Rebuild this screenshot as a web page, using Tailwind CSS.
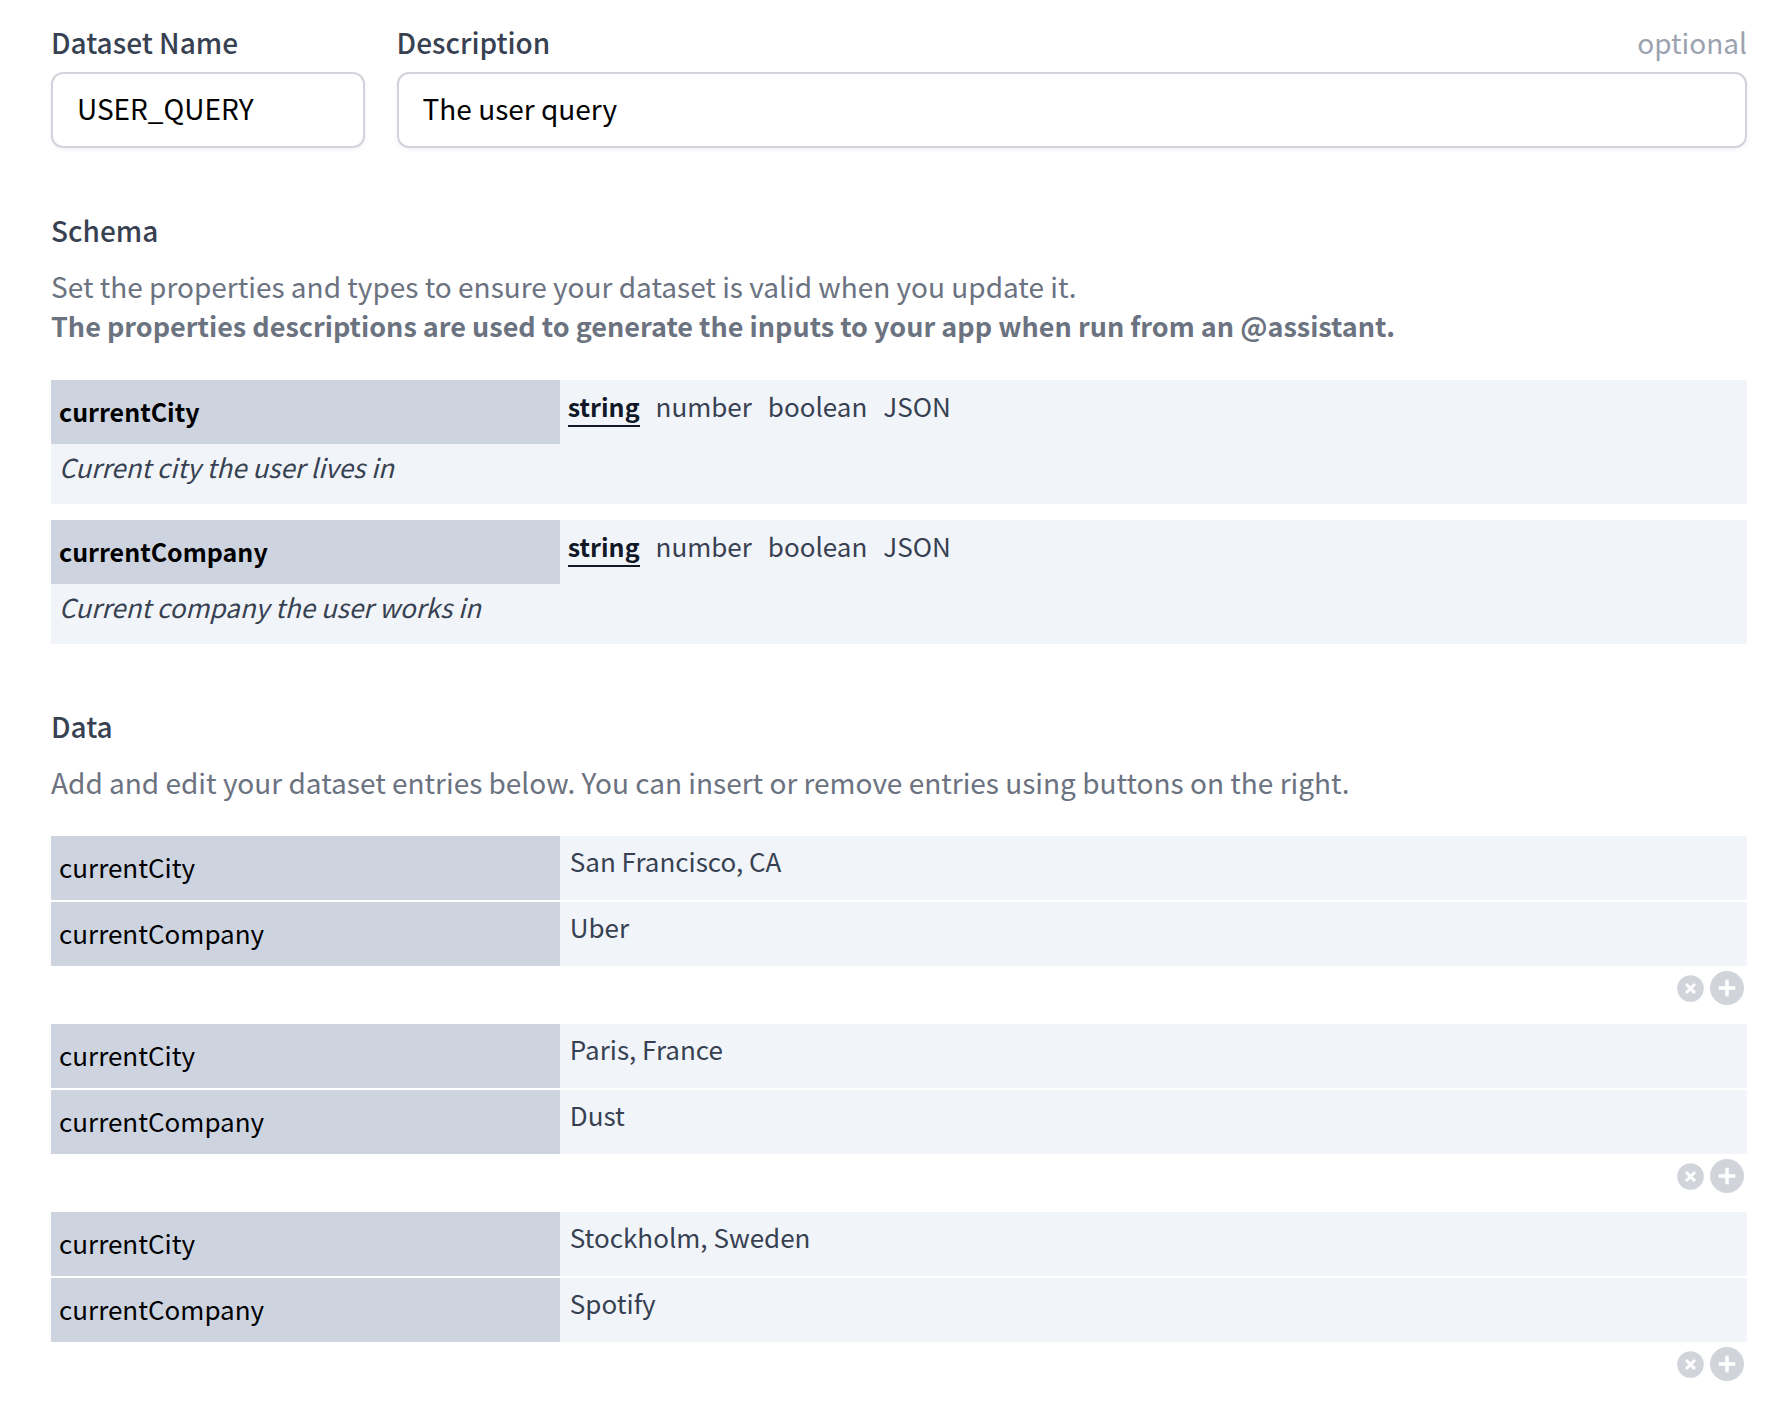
<!DOCTYPE html>
<html lang="en">
<head>
<meta charset="utf-8">
<meta name="viewport" content="width=device-width, initial-scale=1">
<title>Dataset</title>
<script src="https://cdn.jsdelivr.net/npm/@tailwindcss/browser@4"></script>
</head>
<body class="bg-white font-['Noto_Sans_CJK_SC',sans-serif] text-[28px] text-[#374151]">
<main class="pt-6 pr-[41px] pb-3 pl-[51px]">

  <form class="grid grid-cols-5 gap-8">
    <div>
      <label for="name" class="block leading-9 font-medium">Dataset Name</label>
      <input id="name" type="text" value="USER_QUERY" class="mt-3 block h-[76px] w-full rounded-xl border-2 border-[#d1d5db] bg-white px-6 pb-1 text-black shadow-[0_2px_4px_rgba(0,0,0,0.05)]">
    </div>
    <div class="col-span-4">
      <div class="flex justify-between leading-9">
        <label for="description" class="font-medium">Description</label>
        <span class="text-[#9ca3af]">optional</span>
      </div>
      <input id="description" type="text" value="The user query" class="mt-3 block h-[76px] w-full rounded-xl border-2 border-[#d1d5db] bg-white px-6 pb-1 text-black shadow-[0_2px_4px_rgba(0,0,0,0.05)]">
    </div>
  </form>

  <section class="mt-16">
    <h2 class="leading-9 font-medium">Schema</h2>
    <p class="mt-[18px] leading-10 text-[#6b7280]">Set the properties and types to ensure your dataset is valid when you update it.<strong class="block text-[27px] font-bold">The properties descriptions are used to generate the inputs to your app when run from an @assistant.</strong></p>

    <div class="mt-[34px] flex flex-col gap-4">
      <div class="bg-[#f1f5fa]">
        <div class="flex">
          <input type="text" aria-label="Property name" value="currentCity" class="w-[30%] bg-[#cdd4e0] px-2 pt-[13px] pb-[15px] text-[25px] leading-9 font-bold text-black">
          <div class="flex items-start gap-4 px-2 pt-2 text-[26px] leading-9">
            <button type="button" aria-pressed="true" class="border-b-2 border-[#111827] pb-px text-[25px] font-bold text-[#111827]">string</button>
            <button type="button" aria-pressed="false">number</button>
            <button type="button" aria-pressed="false">boolean</button>
            <button type="button" aria-pressed="false">JSON</button>
          </div>
        </div>
        <input type="text" aria-label="Property description" value="Current city the user lives in" class="block w-full px-2 pt-[5px] pb-[19px] text-[26px] leading-9 italic">
      </div>
      <div class="bg-[#f1f5fa]">
        <div class="flex">
          <input type="text" aria-label="Property name" value="currentCompany" class="w-[30%] bg-[#cdd4e0] px-2 pt-[13px] pb-[15px] text-[25px] leading-9 font-bold text-black">
          <div class="flex items-start gap-4 px-2 pt-2 text-[26px] leading-9">
            <button type="button" aria-pressed="true" class="border-b-2 border-[#111827] pb-px text-[25px] font-bold text-[#111827]">string</button>
            <button type="button" aria-pressed="false">number</button>
            <button type="button" aria-pressed="false">boolean</button>
            <button type="button" aria-pressed="false">JSON</button>
          </div>
        </div>
        <input type="text" aria-label="Property description" value="Current company the user works in" class="block w-full px-2 pt-[5px] pb-[19px] text-[26px] leading-9 italic">
      </div>
    </div>
  </section>

  <section class="mt-16">
    <h2 class="leading-9 font-medium">Data</h2>
    <p class="mt-[18px] leading-10 text-[#6b7280]">Add and edit your dataset entries below. You can insert or remove entries using buttons on the right.</p>

    <div id="entries" class="mt-[34px]"></div>
  </section>
</main>

<template id="entry">
  <div>
    <div class="flex flex-col gap-0.5 text-[26px] leading-9">
      <div class="flex bg-[#f1f5fa]">
        <label class="w-[30%] bg-[#cdd4e0] px-2 pt-[13px] pb-[15px] text-black">currentCity</label>
        <input type="text" class="min-w-0 flex-1 px-2.5 pt-[7px] pb-[21px]">
      </div>
      <div class="flex bg-[#f1f5fa]">
        <label class="w-[30%] bg-[#cdd4e0] px-2 pt-[13px] pb-[15px] text-black">currentCompany</label>
        <input type="text" class="min-w-0 flex-1 px-2.5 pt-[7px] pb-[21px]">
      </div>
    </div>
    <div class="flex h-[58px] items-start justify-end gap-1.5 pt-[5px] pr-[3px] text-[#d1d5db]">
      <button type="button" aria-label="Remove entry" class="flex h-[34px] items-center">
        <svg class="size-[27px]" viewBox="0 0 27 27"><circle cx="13.5" cy="13.5" r="13.3" fill="currentColor"/><path d="M9 9l9 9M18 9l-9 9" stroke="#fff" stroke-width="2.9"/></svg>
      </button>
      <button type="button" aria-label="Insert entry">
        <svg class="size-[34px]" viewBox="0 0 34 34"><circle cx="17" cy="17" r="17" fill="currentColor"/><path d="M17 8.7v16.6M8.7 17h16.6" stroke="#fff" stroke-width="3.5"/></svg>
      </button>
    </div>
  </div>
</template>

<script>
  const entries = [
    ["San Francisco, CA", "Uber"],
    ["Paris, France", "Dust"],
    ["Stockholm, Sweden", "Spotify"],
  ];
  const list = document.getElementById("entries");
  const template = document.getElementById("entry");
  entries.forEach((values, row) => {
    const node = template.content.cloneNode(true);
    const labels = node.querySelectorAll("label");
    node.querySelectorAll("input").forEach((input, i) => {
      input.id = `entry-${row}-${i}`;
      input.value = values[i];
      labels[i].htmlFor = input.id;
    });
    list.appendChild(node);
  });
</script>
</body>
</html>
